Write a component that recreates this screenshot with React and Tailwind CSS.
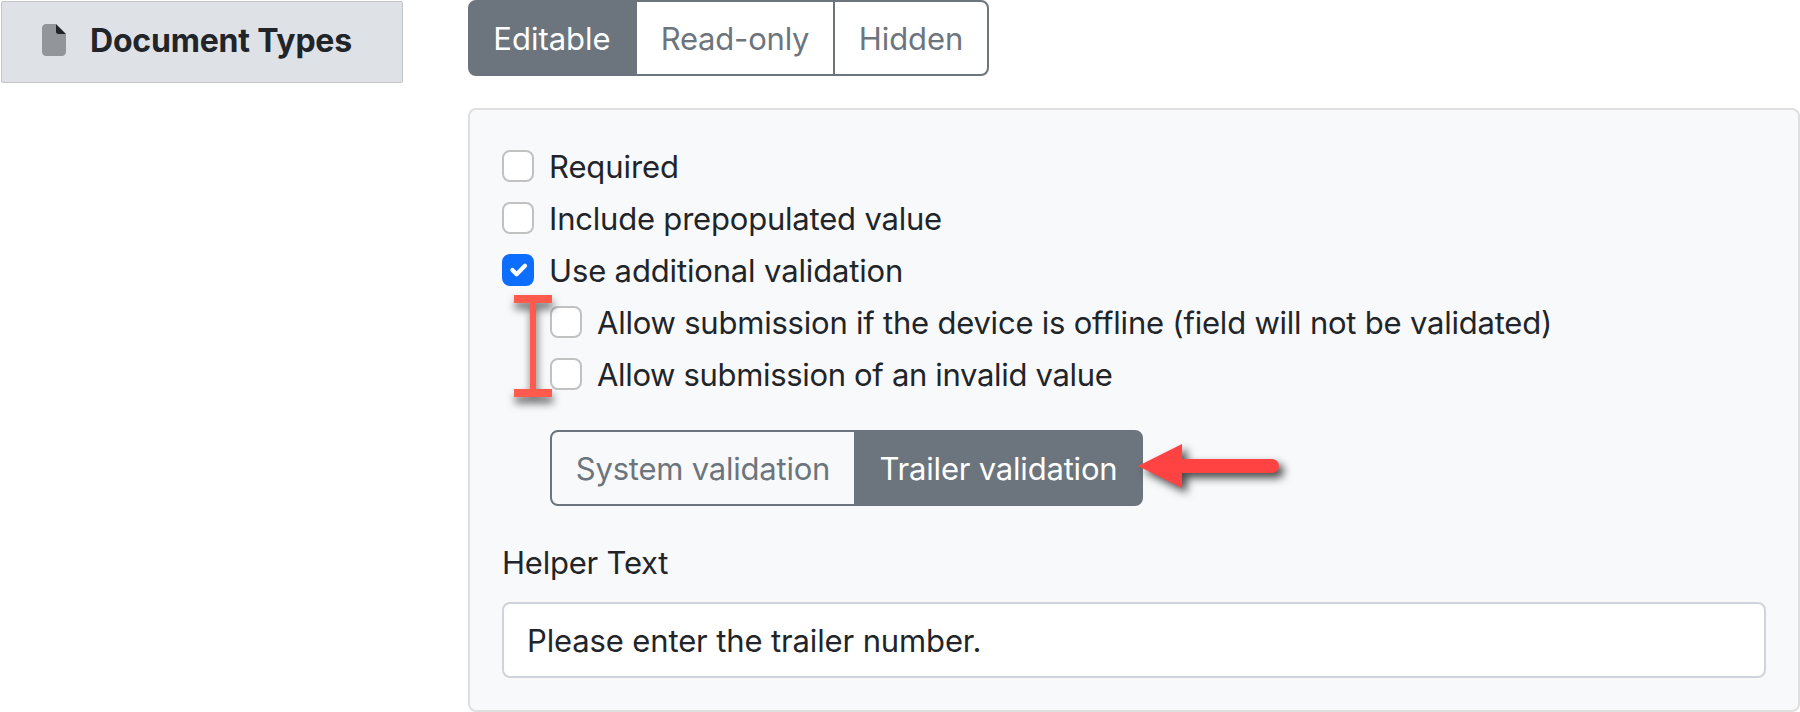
import { useState } from 'react';
import clsx from 'clsx';

const MODES = [
  { id: 'editable', label: 'Editable', className: 'w-[169px] pr-px' },
  { id: 'readonly', label: 'Read-only', className: 'w-[200px] tracking-[-0.2px]' },
  { id: 'hidden', label: 'Hidden', className: 'w-[156px] tracking-[-0.1px]' },
];

const VALIDATIONS = [
  { id: 'system', label: 'System validation', className: 'w-[306px] tracking-[-0.22px]' },
  { id: 'trailer', label: 'Trailer validation', className: 'w-[289px] tracking-[-0.2px]' },
];

const FileIcon = () => (
  <svg viewBox="0 0 384 512" className="h-8 w-6 shrink-0 fill-[#212529]">
    <path
      opacity="0.4"
      d="M0 64C0 28.7 28.7 0 64 0H224V128c0 17.7 14.3 32 32 32H384V448c0 35.3-28.7 64-64 64H64c-35.3 0-64-28.7-64-64V64z"
    />
    <path d="M384 160H256c-17.7 0-32-14.3-32-32V0L384 160z" />
  </svg>
);

const ButtonGroup = ({ items, value, onChange }) => (
  <div className="flex h-[76px]">
    {items.map((item) => (
      <button
        key={item.id}
        type="button"
        onClick={() => onChange(item.id)}
        className={clsx(
          'flex items-center justify-center border-2 border-[#6c757d] pt-px whitespace-nowrap not-first:-ml-[2px] first:rounded-l-lg last:rounded-r-lg',
          item.className,
          item.id === value ? 'bg-[#6c757d] text-white' : 'text-[#6c757d]'
        )}
      >
        {item.label}
      </button>
    ))}
  </div>
);

const Checkbox = ({ label, className, defaultChecked = false }) => {
  const [checked, setChecked] = useState(defaultChecked);

  return (
    <label className={clsx('flex h-12 items-center gap-[15px] whitespace-nowrap', className)}>
      <input
        type="checkbox"
        className="sr-only"
        checked={checked}
        onChange={(e) => setChecked(e.target.checked)}
      />
      <span
        className={clsx(
          'mb-0.5 size-8 shrink-0 rounded-lg border-2',
          checked ? 'border-[#0d6efd] bg-[#0d6efd]' : 'border-[#c1c1c2] bg-white'
        )}
      >
        {checked && (
          <svg viewBox="0 0 20 20" className="size-7 fill-none stroke-white stroke-3">
            <path strokeLinecap="round" strokeLinejoin="round" d="m6 10 3 3 6-6" />
          </svg>
        )}
      </span>
      <span>{label}</span>
    </label>
  );
};

// bracket next to the nested options
const Bracket = () => (
  <svg
    viewBox="0 0 38 102"
    className="absolute top-[185px] left-[44px] h-[102px] w-[38px] overflow-visible fill-[#ff5a4c] drop-shadow-[1px_6px_4px_rgba(0,0,0,0.6)]"
  >
    <path d="M0 0h38v8H22v86h16v8H0v-8h16V8H0z" />
  </svg>
);

const Arrow = () => (
  <svg
    viewBox="0 0 141 44"
    className="absolute top-[14px] left-[588px] h-[44px] w-[141px] overflow-visible fill-[#ff4343] drop-shadow-[5px_5px_4px_rgba(0,0,0,0.7)]"
  >
    <path d="M0 22 44 0v15h90a7 7 0 0 1 0 14H44v15z" />
  </svg>
);

const Sidebar = () => (
  <aside className="w-[468px] shrink-0 pt-px pl-px">
    <div className="flex h-[82px] w-[402px] items-center rounded-[2px] border border-[#c3c6c9] bg-[#dee2e6] pb-1 pl-10">
      <FileIcon />
      <span className="ml-6 pt-0.5 text-[32px] leading-[48px] font-bold tracking-[-0.2px] whitespace-nowrap">
        Document Types
      </span>
    </div>
  </aside>
);

const FieldSettings = () => {
  const [validation, setValidation] = useState('trailer');

  return (
    <section className="relative mt-8 h-[604px] rounded-lg border-2 border-[#dfdfe0] bg-[#f8f9fb] px-8 pt-[33px]">
      <div className="flex flex-col gap-1">
        <Checkbox label="Required" className="tracking-[-0.1px]" />
        <Checkbox label="Include prepopulated value" className="tracking-[-0.2px]" />
        <Checkbox label="Use additional validation" className="tracking-[-0.15px]" defaultChecked />
        <Checkbox
          label="Allow submission if the device is offline (field will not be validated)"
          className="ml-12 tracking-[-0.22px]"
        />
        <Checkbox label="Allow submission of an invalid value" className="ml-12 tracking-[-0.33px]" />
      </div>
      <Bracket />
      <div className="relative mt-[31px] ml-12">
        <ButtonGroup items={VALIDATIONS} value={validation} onChange={setValidation} />
        <Arrow />
      </div>
      <label className="mt-[33px] block">
        <span className="block h-12 tracking-[-0.22px]">Helper Text</span>
        <input
          type="text"
          defaultValue="Please enter the trailer number."
          className="mt-[15px] block h-[76px] w-full rounded-lg border-2 border-[#ced4da] bg-white px-[23px] tracking-[-0.13px]"
        />
      </label>
    </section>
  );
};

export default function App() {
  const [mode, setMode] = useState('editable');

  return (
    <div className="flex h-[712px] w-[1800px] overflow-hidden bg-white font-['Inter','Liberation_Sans',sans-serif] text-[31px] leading-[48px] text-[#212529]">
      <Sidebar />
      <main className="flex-1">
        <ButtonGroup items={MODES} value={mode} onChange={setMode} />
        <FieldSettings />
      </main>
    </div>
  );
}
